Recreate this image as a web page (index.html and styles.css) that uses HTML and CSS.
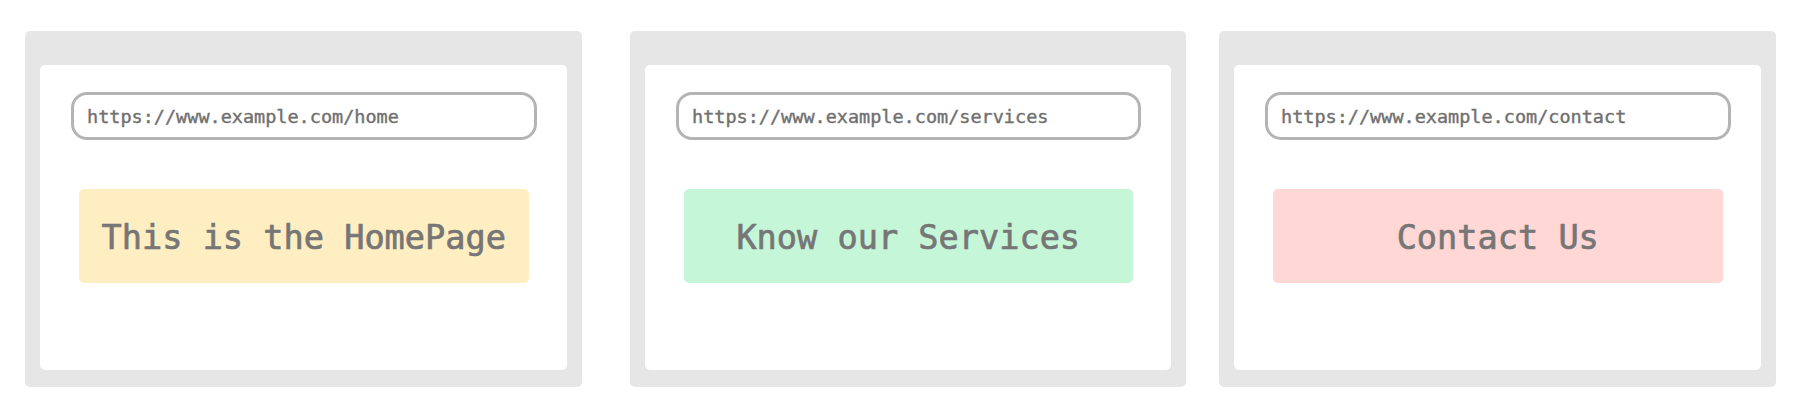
FILE: index.html
```html
<!DOCTYPE html>
<html lang="en">
<head>
<meta charset="utf-8">
<title>Pages</title>
<link rel="stylesheet" href="styles.css">
</head>
<body>
<div class="row">
  <div class="window">
    <div class="page">
      <div class="url">https://www.example.com/home</div>
      <div class="banner banner-yellow">This is the HomePage</div>
    </div>
  </div>
  <div class="window window-second">
    <div class="page">
      <div class="url">https://www.example.com/services</div>
      <div class="banner banner-green">Know our Services</div>
    </div>
  </div>
  <div class="window">
    <div class="page">
      <div class="url">https://www.example.com/contact</div>
      <div class="banner banner-pink">Contact Us</div>
    </div>
  </div>
</div>
</body>
</html>
```

FILE: styles.css
```css
html, body {
  margin: 0;
  padding: 0;
  background: #ffffff;
}

body {
  width: 1794px;
  height: 414px;
  font-family: "DejaVu Sans Mono", "Liberation Mono", monospace;
  color: #767676;
}

.row {
  display: flex;
  gap: 33px;
  padding: 31px 0 0 25px;
}

.window {
  width: 557px;
  height: 356px;
  box-sizing: border-box;
  background: #e6e6e6;
  border-radius: 5px;
  padding: 33.5px 15px 17px 15px;
}

.window-second {
  width: 556px;
  margin-left: 15px;
}

.page {
  height: 100%;
  box-sizing: border-box;
  background: #ffffff;
  border-radius: 5px;
  padding: 27px 30px 0 31px;
}

.url {
  height: 48px;
  box-sizing: border-box;
  border: 3px solid #b4b4b4;
  border-radius: 16px;
  padding: 3px 13px 0 13px;
  display: flex;
  align-items: center;
  font-size: 18.5px;
  line-height: 1;
  color: #707070;
  -webkit-text-stroke: 0.4px #707070;
}

.banner {
  margin: 49px 8.5px 0 8px;
  height: 94px;
  box-sizing: border-box;
  padding-top: 4px;
  border-radius: 5px;
  display: flex;
  align-items: center;
  justify-content: center;
  font-size: 33.6px;
  line-height: 1;
  color: #767676;
  -webkit-text-stroke: 0.7px #767676;
}

.banner-yellow { background: #ffeec2; }
.banner-green  { background: #c6f6d8; }
.banner-pink   { background: #ffd7d5; }
```
